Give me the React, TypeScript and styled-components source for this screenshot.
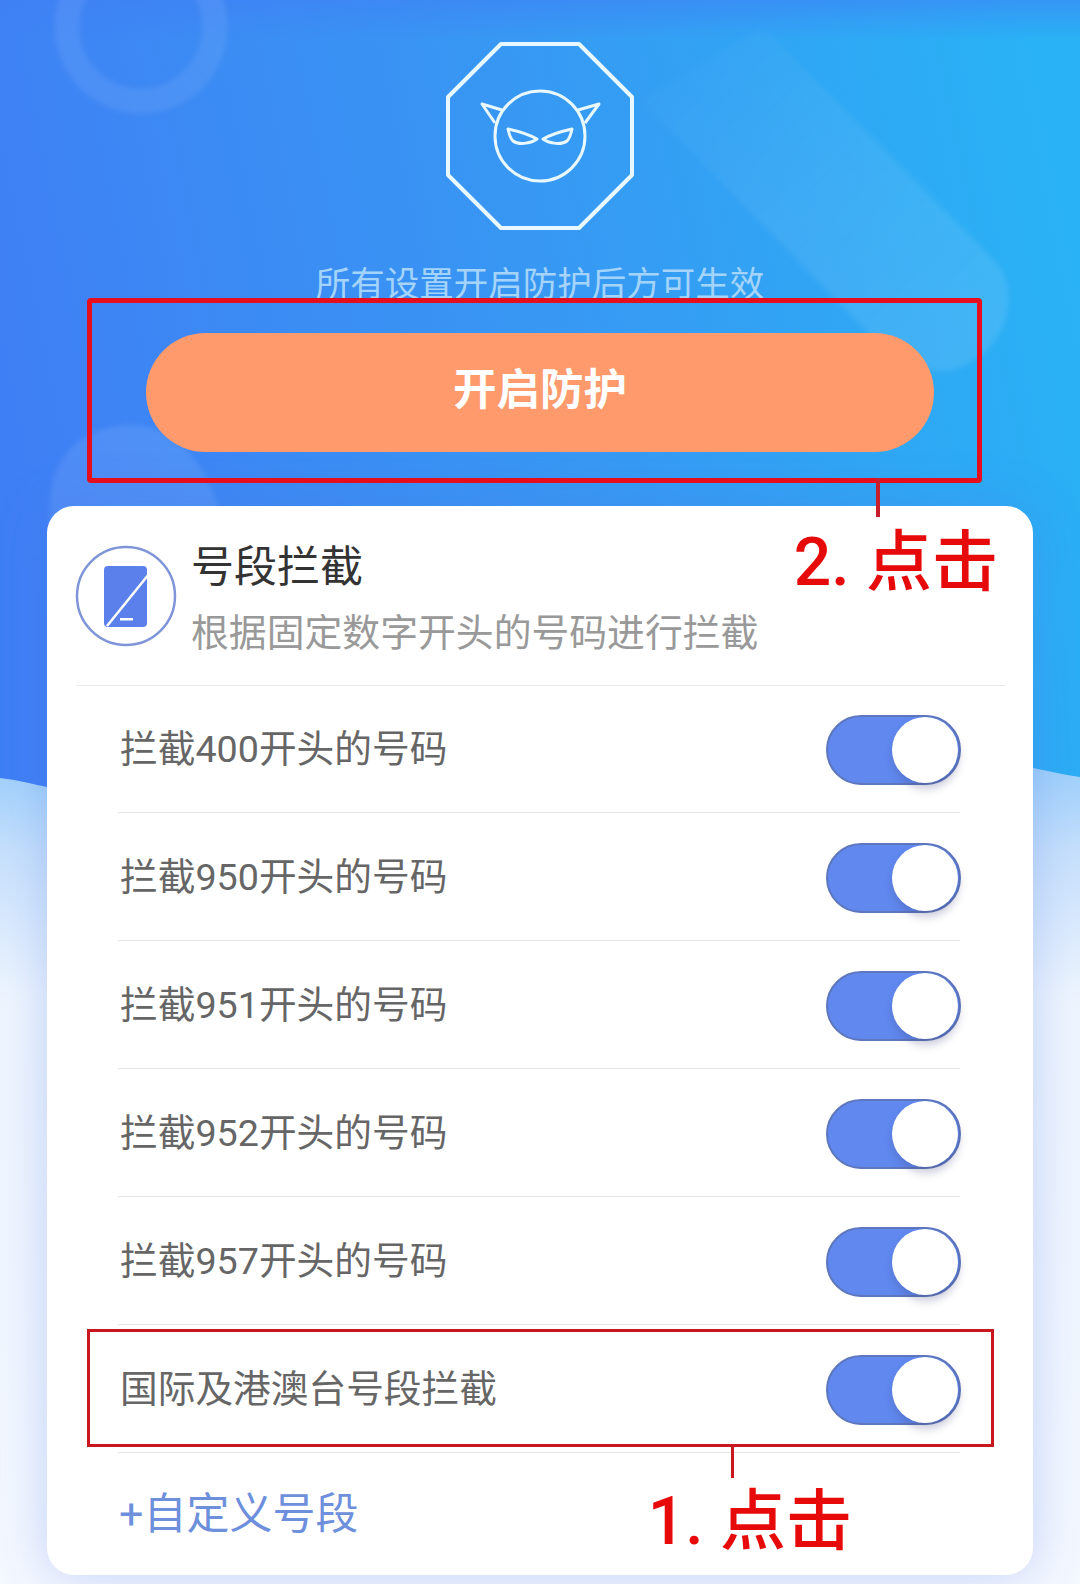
import React from "react";
import styled, { createGlobalStyle } from "styled-components";

const Global = createGlobalStyle`
  html, body { margin: 0; padding: 0; background: #e6eefc; }
  * { box-sizing: border-box; }
  body { font-family: Roboto, "Noto Sans CJK SC", sans-serif; }
`;

const Page = styled.div`
  position: relative;
  width: 1080px;
  height: 1584px;
  overflow: hidden;
  display: flex;
  flex-direction: column;
  align-items: center;
  padding-top: 42px;
`;

const Backdrop = styled.svg`
  position: absolute;
  inset: 0;
  width: 1080px;
  height: 1584px;
`;

const Badge = styled.svg`
  position: relative;
  display: block;
  width: 188px;
  height: 188px;
  flex: none;
`;

const Hint = styled.p`
  position: relative;
  margin: 32px 0 0;
  font-size: 34.5px;
  line-height: 44px;
  color: #a5d4fa;
  white-space: nowrap;
`;

const ActionSlot = styled.div`
  position: relative;
  width: 788px;
  margin-top: 27px;
`;

const PrimaryButton = styled.button`
  display: block;
  width: 100%;
  height: 119px;
  padding: 0 0 12px;
  border: none;
  border-radius: 60px;
  background: #ff9a6d;
  color: #fff;
  font-family: inherit;
  font-size: 43.5px;
  font-weight: 700;
`;

const CalloutFrame = styled.div<{ $weight: number; $colour: string; $radius: number }>`
  position: absolute;
  border: ${(p) => p.$weight}px solid ${(p) => p.$colour};
  border-radius: ${(p) => p.$radius}px;
  pointer-events: none;
  z-index: 2;
`;

const ButtonFrame = styled(CalloutFrame)`
  top: -35px;
  left: -59px;
  right: -48px;
  bottom: -31px;
`;

const RowFrame = styled(CalloutFrame)`
  top: 4px;
  left: -31px;
  right: -34px;
  bottom: 5px;
`;

const Leader = styled.span<{ $weight: number; $colour: string; $length: number; $right: number }>`
  position: absolute;
  top: 100%;
  right: ${(p) => p.$right}px;
  width: ${(p) => p.$weight}px;
  height: ${(p) => p.$length}px;
  background: ${(p) => p.$colour};
`;

const CalloutLabel = styled.span<{ $top: number; $right: number }>`
  position: absolute;
  top: ${(p) => p.$top}px;
  right: ${(p) => p.$right}px;
  font-size: 66px;
  line-height: 70px;
  font-weight: 500;
  color: #e60a0a;
  white-space: nowrap;
`;

const Card = styled.section`
  position: relative;
  width: 986px;
  height: 1069px;
  margin-top: 54px;
  background: #fff;
  border-radius: 27px;
  box-shadow: 0 0 50px rgba(80, 120, 230, 0.3);
  display: flex;
  flex-direction: column;
`;

const CardHeader = styled.header`
  height: 180px;
  margin: 0 28px 0 29px;
  border-bottom: 1px solid #e9e9e9;
  display: flex;
  align-items: flex-start;
`;

const HeaderIcon = styled.svg`
  display: block;
  width: 102px;
  height: 102px;
  margin-top: 39px;
  margin-left: -1px;
  flex: none;
`;

const HeaderText = styled.div`
  margin-left: 14px;
  display: flex;
  flex-direction: column;
`;

const CardTitle = styled.h2`
  margin: 32px 0 0;
  font-size: 43px;
  line-height: 58px;
  font-weight: 400;
  color: #333;
`;

const CardSubtitle = styled.p`
  margin: 12px 0 0;
  font-size: 37.85px;
  line-height: 50px;
  color: #999;
  white-space: nowrap;
`;

const RuleList = styled.div`
  display: flex;
  flex-direction: column;
  margin: -1px 73px 0 71px;
`;

const Rule = styled.div`
  position: relative;
  height: 128px;
  border-bottom: 1px solid #e4e4e4;
  display: flex;
  align-items: center;
  justify-content: space-between;
  padding: 0 0 0 2px;
`;

const RuleName = styled.span`
  font-size: 37.7px;
  line-height: 50px;
  color: #666;
  margin-top: 1px;
`;

const Toggle = styled.span`
  position: relative;
  display: block;
  width: 135px;
  height: 70px;
  margin: 3px -1px 0 0;
  border-radius: 35px;
  background: #6088ef;
  border: 2px solid #5d76bd;
`;

const Knob = styled.span`
  position: absolute;
  right: 1px;
  top: 0;
  width: 66px;
  height: 66px;
  border-radius: 50%;
  background: #fff;
  box-shadow: 1px 6px 9px rgba(60, 70, 120, 0.28);
`;

const AddRange = styled.div`
  margin: 33px 0 0 71px;
  padding-left: 1px;
  font-size: 43px;
  line-height: 56px;
  color: #6e8fdc;
`;

const rules = [
  "拦截400开头的号码",
  "拦截950开头的号码",
  "拦截951开头的号码",
  "拦截952开头的号码",
  "拦截957开头的号码",
  "国际及港澳台号段拦截",
];

export default function App() {
  return (
    <Page>
      <Global />
      <Backdrop viewBox="0 0 1080 1584">
        <defs>
          <linearGradient id="blue" x1="0" y1="0.5" x2="1" y2="0.35">
            <stop offset="0" stopColor="#3f7ff5" />
            <stop offset="0.5" stopColor="#3897f3" />
            <stop offset="1" stopColor="#29b2f5" />
          </linearGradient>
          <linearGradient id="crown" x1="0" y1="0" x2="0" y2="1">
            <stop offset="0" stopColor="#3f7ff5" stopOpacity="0.55" />
            <stop offset="1" stopColor="#3f7ff5" stopOpacity="0" />
          </linearGradient>
          <linearGradient id="pale" x1="0" y1="0" x2="0" y2="1">
            <stop offset="0" stopColor="#9ed0fb" />
            <stop offset="0.1" stopColor="#c6e0fc" />
            <stop offset="0.28" stopColor="#eef5fe" />
            <stop offset="1" stopColor="#f4f8ff" />
          </linearGradient>
          <linearGradient id="band" x1="0" y1="0" x2="1" y2="1">
            <stop offset="0" stopColor="#fff" stopOpacity="0" />
            <stop offset="0.5" stopColor="#fff" stopOpacity="0.07" />
            <stop offset="1" stopColor="#fff" stopOpacity="0.11" />
          </linearGradient>
          <filter id="soft">
            <feGaussianBlur stdDeviation="2.5" />
          </filter>
        </defs>
        <rect width="1080" height="800" fill="url(#blue)" />
        <rect width="1080" height="40" fill="url(#crown)" />
        <g filter="url(#soft)">
          <circle cx="141" cy="27" r="74" fill="none" stroke="#fff" strokeOpacity="0.08" strokeWidth="25" />
          <path d="M130 425c45 0 75 35 90 90v100H50V505c0-50 35-80 80-80z" fill="#fff" fillOpacity="0.09" />
          <path d="M763 27L997 263Q1015 285 1005 320Q995 355 953 370Q915 375 880 345L670 130L640 100z" fill="url(#band)" />
        </g>
        <path d="M0 778C20 780 35 785 47 787L1033 768C1050 771 1065 775 1080 777V1584H0z" fill="url(#pale)" />
      </Backdrop>

      <Badge viewBox="0 0 188 188">
        <g fill="none" stroke="#e9f7ff" strokeLinejoin="round">
          <path strokeWidth="4" d="M55 2H133L186 55V133L133 186H55L2 133V55z" />
          <circle cx="94" cy="94" r="45" strokeWidth="3" />
          <path strokeWidth="3" d="M56 68L36 62L49 81" />
          <path strokeWidth="3" d="M132 68L153 62L139 81" />
          <path strokeWidth="3" d="M62 87C71 89 82 92 91 97C84 102 72 103 67 99C64 96 63 92 62 87z" />
          <path strokeWidth="3" d="M126 87C117 89 106 92 97 97C104 102 116 103 121 99C124 96 125 92 126 87z" />
        </g>
      </Badge>

      <Hint>所有设置开启防护后方可生效</Hint>

      <ActionSlot>
        <PrimaryButton>开启防护</PrimaryButton>
        <ButtonFrame $weight={5} $colour="#e60d1d" $radius={4}>
          <Leader $weight={4} $colour="#c81e2c" $length={39} $right={97} />
          <CalloutLabel $top={225} $right={-21}>2. 点击</CalloutLabel>
        </ButtonFrame>
      </ActionSlot>

      <Card>
        <CardHeader>
          <HeaderIcon viewBox="0 0 102 102">
            <circle cx="51" cy="51" r="49" fill="#fff" stroke="#7f95d8" strokeWidth="2.5" />
            <rect x="29" y="21" width="43" height="61" rx="4" fill="#5b80ec" />
            <path d="M74 29L32 81" stroke="#fff" strokeWidth="2.5" fill="none" />
            <rect x="45" y="73" width="13" height="2.5" fill="#fff" />
          </HeaderIcon>
          <HeaderText>
            <CardTitle>号段拦截</CardTitle>
            <CardSubtitle>根据固定数字开头的号码进行拦截</CardSubtitle>
          </HeaderText>
        </CardHeader>
        <RuleList>
          {rules.map((name, i) => (
            <Rule key={name}>
              <RuleName>{name}</RuleName>
              <Toggle>
                <Knob />
              </Toggle>
              {i === rules.length - 1 && (
                <RowFrame $weight={3} $colour="#c9171f" $radius={0}>
                  <Leader $weight={3} $colour="#c9171f" $length={34} $right={257} />
                  <CalloutLabel $top={155} $right={139}>1. 点击</CalloutLabel>
                </RowFrame>
              )}
            </Rule>
          ))}
        </RuleList>
        <AddRange>+自定义号段</AddRange>
      </Card>
    </Page>
  );
}
